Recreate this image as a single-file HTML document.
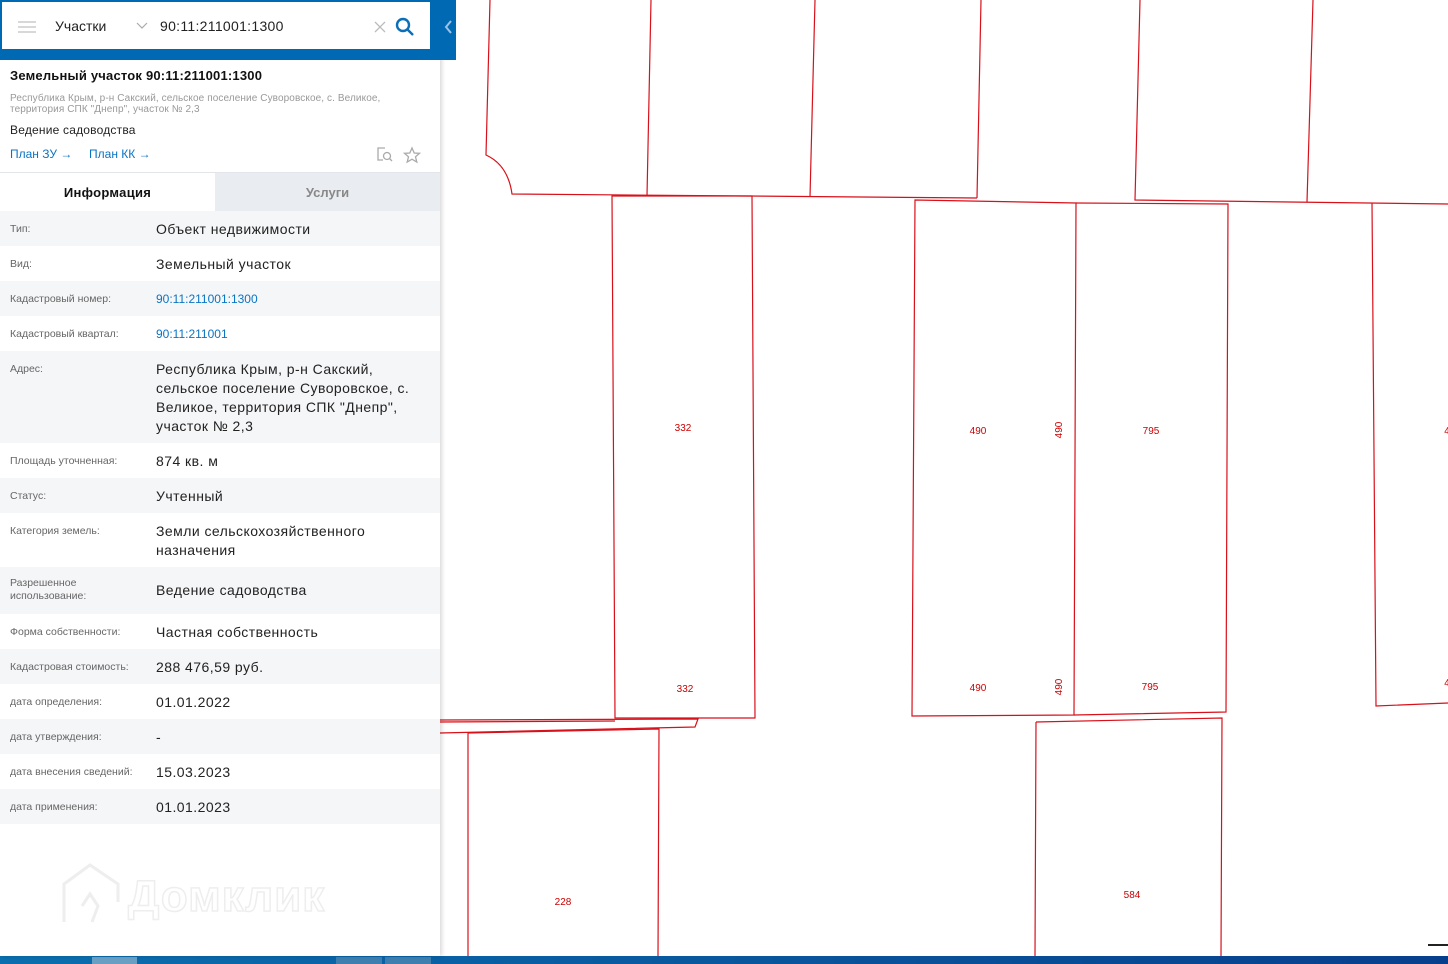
<!DOCTYPE html>
<html><head><meta charset="utf-8"><style>
*{margin:0;padding:0;box-sizing:border-box}
body{width:1448px;height:964px;overflow:hidden;background:#fff;font-family:"Liberation Sans","DejaVu Sans",sans-serif;position:relative}
#map{position:absolute;left:0;top:0}
#panel{position:absolute;left:0;top:0;width:440px;height:956px;background:#fff;box-shadow:2px 0 4px rgba(0,0,0,.15)}
#bar{position:absolute;left:0;top:0;width:456px;height:60px;background:#0069b4}
#search{position:absolute;left:2px;top:2px;width:428px;height:47px;background:#fff}
.row{display:flex;font-size:14px;color:#222;width:440px}
.row .k{width:156px;flex-shrink:0;padding-left:10px;padding-right:16px;font-size:10.5px;color:#666;padding-top:12px;line-height:13px}
.row .v{width:260px;padding-top:9px;line-height:19px;letter-spacing:.45px}
.g{background:#f5f6f8}
a{color:#0a74c4;text-decoration:none}
</style></head><body>
<svg id="map" width="1448" height="964" viewBox="0 0 1448 964" fill="none" stroke="#d8101a" stroke-width="1.2">
<path d="M490 0 L486 155 Q508 165 512 194 L977 198"/>
<path d="M651 0 L647 196 M815 0 L810 197 M981 0 L977 198 M1140 0 L1135 200 L1448 204 M1313 0 L1307 202"/>
<path d="M612 196 L752 196 L755 718 L615 718 Z"/>
<path d="M915 200 L1076 203 L1074 715 L912 716 Z"/>
<path d="M1076 203 L1228 204 L1226 712 L1074 715"/>
<path d="M1372 203 L1376 706 L1448 703"/>
<path d="M440 720 L698 719 L695 727 L440 733 M440 722 L615 721"/>
<path d="M468 733 L659 729 L658 956 M468 733 L468 956"/>
<path d="M1036 722 L1222 718 L1221 956 M1036 722 L1035 956"/>
<g fill="#c00" stroke="none" font-size="10" font-family="Liberation Sans,sans-serif" text-anchor="middle">
<text x="683" y="431">332</text><text x="685" y="692">332</text>
<text x="978" y="434">490</text><text x="978" y="691">490</text>
<text x="1151" y="434">795</text><text x="1150" y="690">795</text>
<text x="563" y="905">228</text><text x="1132" y="898">584</text>
<text x="1447" y="434">4</text><text x="1447" y="686">4</text>
<text transform="translate(1062,430) rotate(-90)">490</text>
<text transform="translate(1062,687) rotate(-90)">490</text>
</g>
<rect x="1428" y="944" width="20" height="2" fill="#222" stroke="none"/>
</svg>
<div style="position:absolute;left:0;top:956px;width:1448px;height:8px;background:linear-gradient(90deg,#0a6fae,#083f8d)"></div>
<div style="position:absolute;left:92px;top:957px;width:45px;height:7px;background:#6a9fc4"></div>
<div style="position:absolute;left:336px;top:957px;width:46px;height:7px;background:#3f7fb0"></div>
<div style="position:absolute;left:385px;top:957px;width:46px;height:7px;background:#3f7fb0"></div>
<div id="panel">
<div style="position:absolute;left:10px;top:68px;font-size:13px;font-weight:bold;color:#111;letter-spacing:.2px">Земельный участок 90:11:211001:1300</div>
<div style="position:absolute;left:10px;top:93px;font-size:10px;color:#999;line-height:11px;width:420px;letter-spacing:.1px">Республика Крым, р-н Сакский, сельское поселение Суворовское, с. Великое, территория СПК "Днепр", участок № 2,3</div>
<div style="position:absolute;left:10px;top:123px;font-size:12px;color:#222;letter-spacing:.2px">Ведение садоводства</div>
<div style="position:absolute;left:10px;top:147px;font-size:12px"><a>План ЗУ →</a>&nbsp;&nbsp;&nbsp;&nbsp;&nbsp;<a>План КК →</a></div>
<svg style="position:absolute;left:376px;top:146px" width="46" height="18" fill="none" stroke="#aaa" stroke-width="1.3"><path d="M9 2H2V14H7"/><circle cx="11" cy="10" r="3.5"/><path d="M13.5 12.5L16 15"/><path d="M36 2L38.2 7 43.5 7.3 39.5 10.8 40.8 16 36 13.2 31.2 16 32.5 10.8 28.5 7.3 33.8 7Z"/></svg>
<div style="position:absolute;left:0;top:172px;width:440px;height:39px;border-top:1px solid #e3e5e8;display:flex;font-size:13px;font-weight:bold">
<div style="width:215px;text-align:center;padding-top:12px;color:#111;letter-spacing:.3px">Информация</div>
<div style="width:225px;text-align:center;padding-top:12px;color:#888;background:#e9ecf0">Услуги</div></div>
<div style="position:absolute;left:0;top:211px">
<div class="row g" style="height:35px"><div class="k">Тип:</div><div class="v">Объект недвижимости</div></div>
<div class="row" style="height:35px"><div class="k">Вид:</div><div class="v">Земельный участок</div></div>
<div class="row g" style="height:35px"><div class="k">Кадастровый номер:</div><div class="v" style="font-size:12px;letter-spacing:0"><a>90:11:211001:1300</a></div></div>
<div class="row" style="height:35px"><div class="k">Кадастровый квартал:</div><div class="v" style="font-size:12px;letter-spacing:0"><a>90:11:211001</a></div></div>
<div class="row g" style="height:92px"><div class="k">Адрес:</div><div class="v">Республика Крым, р-н Сакский, сельское поселение Суворовское, с. Великое, территория СПК "Днепр", участок № 2,3</div></div>
<div class="row" style="height:35px"><div class="k">Площадь уточненная:</div><div class="v">874 кв. м</div></div>
<div class="row g" style="height:35px"><div class="k">Статус:</div><div class="v">Учтенный</div></div>
<div class="row" style="height:54px"><div class="k">Категория земель:</div><div class="v">Земли сельскохозяйственного назначения</div></div>
<div class="row g" style="height:47px"><div class="k" style="padding-top:10px">Разрешенное использование:</div><div class="v" style="padding-top:14px">Ведение садоводства</div></div>
<div class="row" style="height:35px"><div class="k">Форма собственности:</div><div class="v">Частная собственность</div></div>
<div class="row g" style="height:35px"><div class="k">Кадастровая стоимость:</div><div class="v">288 476,59 руб.</div></div>
<div class="row" style="height:35px"><div class="k">дата определения:</div><div class="v">01.01.2022</div></div>
<div class="row g" style="height:35px"><div class="k">дата утверждения:</div><div class="v">-</div></div>
<div class="row" style="height:35px"><div class="k" style="padding-right:0">дата внесения сведений:</div><div class="v">15.03.2023</div></div>
<div class="row g" style="height:35px"><div class="k">дата применения:</div><div class="v">01.01.2023</div></div>
</div>
<svg style="position:absolute;left:60px;top:862px" width="62" height="64" fill="none" stroke="#eee" stroke-width="3"><path d="M4 60V22L30 3 58 22V40M22 44L30 32 38 44 32 60"/></svg>
<div style="position:absolute;left:128px;top:872px;font-size:44px;font-weight:bold;color:#fff;-webkit-text-stroke:1.5px #eee;letter-spacing:1px">Домклик</div>
</div>
<div id="bar">
<div id="search">
<svg style="position:absolute;left:16px;top:18px" width="18" height="14" stroke="#ccc" stroke-width="1.6"><path d="M0 2H18M0 7H18M0 12H18"/></svg>
<div style="position:absolute;left:53px;top:16px;font-size:14px;color:#222">Участки</div>
<svg style="position:absolute;left:134px;top:20px" width="12" height="8" fill="none" stroke="#aaa" stroke-width="1.2"><path d="M1 1L6 6 11 1"/></svg>
<div style="position:absolute;left:158px;top:16px;font-size:14px;color:#222;letter-spacing:.3px">90:11:211001:1300</div>
<svg style="position:absolute;left:372px;top:19px" width="12" height="12" stroke="#bbb" stroke-width="1.3"><path d="M1 1L11 11M11 1L1 11"/></svg>
<svg style="position:absolute;left:393px;top:15px" width="20" height="20" fill="none" stroke="#0a6fb8" stroke-width="2.4"><circle cx="8" cy="8" r="6"/><path d="M12.5 12.5L18 18"/></svg>
</div>
<svg style="position:absolute;left:443px;top:20px" width="10" height="14" fill="none" stroke="#9cc3e6" stroke-width="2"><path d="M8 1L3 7 8 13"/></svg>
</div>
</body></html>
